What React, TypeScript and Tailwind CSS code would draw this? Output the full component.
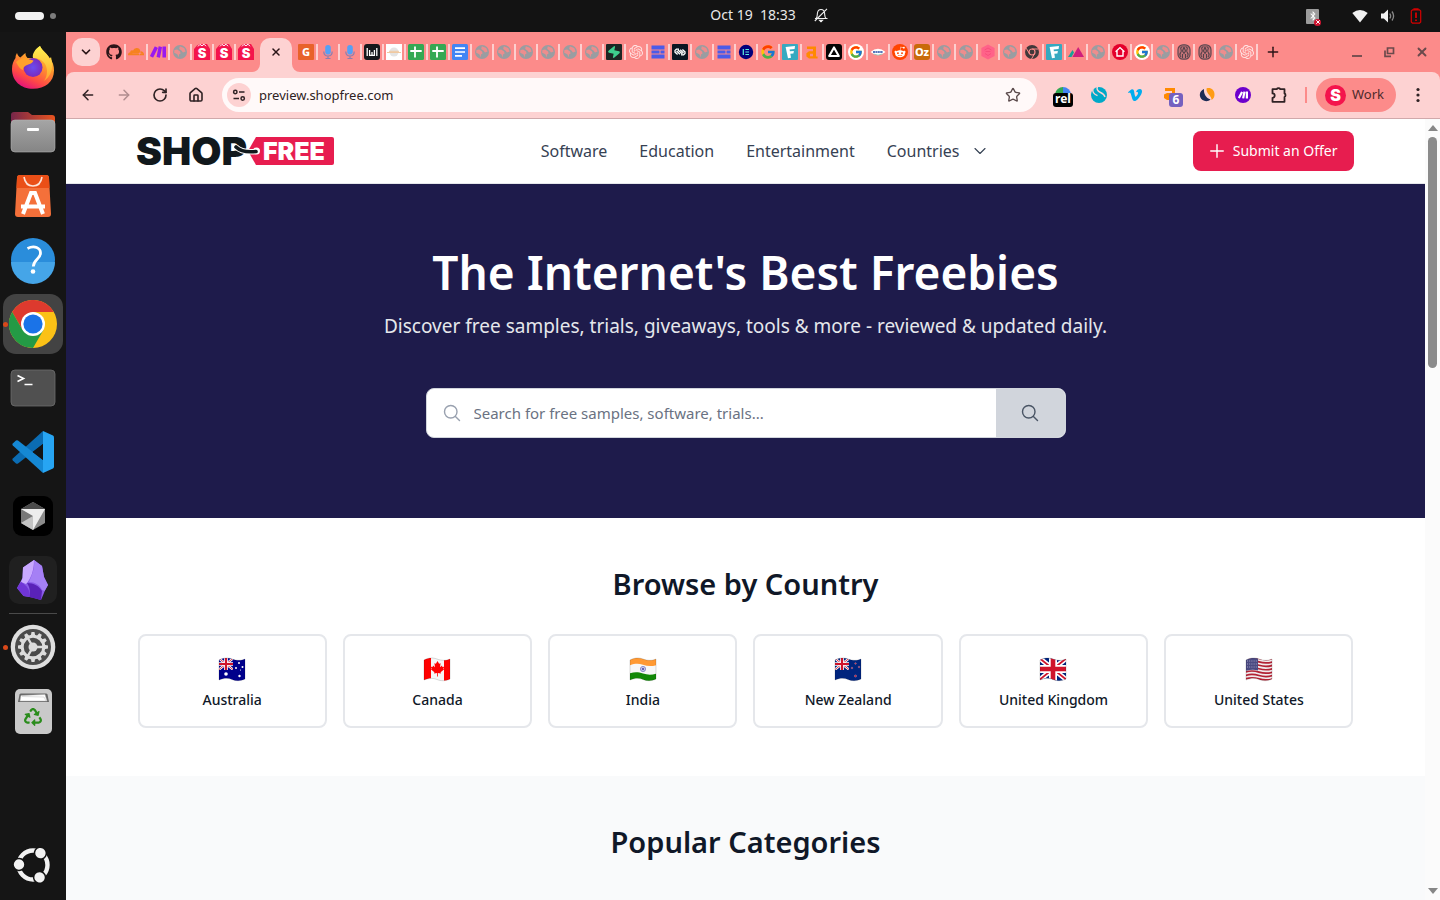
import type { ReactNode } from "react";
import {
  FaBluetoothB,
  FaCloudflare,
  FaGithub,
  FaMicrophone,
  FaRecycle,
  FaRedditAlien,
  FaVimeoV,
} from "react-icons/fa";
import { FcGoogle } from "react-icons/fc";
import { SiMake, SiOpenai, SiSupabase } from "react-icons/si";
import {
  ArrowLeft,
  ArrowRight,
  ChevronDown,
  House,
  Plus,
  RotateCw,
  Star,
  X,
} from "lucide-react";

/* ---------- favicons ---------- */

const Globe = () => (
  <svg viewBox="0 0 16 16" className="size-4">
    <circle cx="8" cy="8" r="7" fill="#9a9da1" />
    <path d="M2.4 6 5.200 5.600 8 7.400 8.600 9.600 7 10.400 6.600 13.500 5.400 10.200 2.200 8.800ZM7.800 2.200 12.200 4 13.600 7.400 11 8.400 9.400 6.600 7.200 5Z" fill="#fc8b8a" fillOpacity=".85" />
  </svg>
);

const ShopS = () => (
  <svg viewBox="0 0 16 16" className="size-4 overflow-visible">
    <path d="M0 5 3 1.5 6 0h7l3 5v11H0Z" fill="#f4144c" />
    <path d="M4 2.4 6 .4l2 1.4L10 .2l2 2" fill="none" stroke="#fff" strokeWidth="1" />
    <text x="8" y="13.6" textAnchor="middle" fontSize="13" fontWeight="900" fontFamily="Inter, sans-serif" fill="#fff">S</text>
  </svg>
);

type TileProps = { bg: string; fg: string; label: string; round?: string };
const Tile = ({ bg, fg, label, round = "rounded-[1px]" }: TileProps) => (
  <span className={`flex size-4 items-center justify-center text-[11px] leading-4 font-extrabold ${bg} ${fg} ${round}`}>
    {label}
  </span>
);

const Sheet = () => (
  <svg viewBox="0 0 16 16" className="size-4">
    <rect width="16" height="16" rx="1.5" fill="#34a853" />
    <path d="M2.3 7h11.4M7 2.5v11" stroke="#fff" strokeWidth="1.8" />
  </svg>
);

const Doc = () => (
  <svg viewBox="0 0 16 16" className="size-4">
    <rect width="16" height="16" rx="1.5" fill="#4285f4" />
    <path d="M3 4.2h10M3 8h10M3 11.8h7" stroke="#fff" strokeWidth="1.7" />
  </svg>
);

const Grid = () => (
  <svg viewBox="0 0 16 16" className="size-4">
    <path d="M1.5 1.5h13v4h-13zM1.5 6.5h8v3h-8zM10.5 6.5h4v3h-4zM1.5 10.5h13v4h-13z" fill="#4b5be8" />
  </svg>
);

const Wave = () => (
  <svg viewBox="0 0 16 16" className="size-4">
    <rect width="16" height="16" rx="3" fill="#17181c" />
    <path d="M3.200 4v8M5.600 6v6M8 8v4M10.400 6v6M12.800 4v8M5.600 11.300h4.800" fill="none" stroke="#fff" strokeWidth="1.300" />
  </svg>
);

const Squid = () => (
  <svg viewBox="0 0 16 16" className="size-4">
    <rect width="16" height="16" rx="1" fill="#0b1622" />
    <path d="M7 5.200H4.400L3 6.500v1.600l2.600 2.400M9 10.800h2.600L13 9.500V7.900l-2.600-2.400M6 6l4.400 4M8.200 5.800 11.500 9M4.600 7 8 10.300" fill="none" stroke="#fff" strokeWidth="1.300" />
  </svg>
);

const White = () => (
  <svg viewBox="0 0 16 16" className="size-4">
    <rect width="16" height="16" fill="#fff" />
    <circle cx="8" cy="8" r="4.5" fill="#e4e4e4" />
    <path d="M1 8.500h14M3 7.300h10" stroke="#f0c9a0" strokeWidth="1" />
  </svg>
);

const Elementor = () => (
  <svg viewBox="0 0 16 16" className="size-4">
    <circle cx="8" cy="8" r="7.2" fill="#03007b" />
    <path d="M5.3 5v6M7.4 5.5H11M7.4 8H11M7.4 10.5H11" stroke="#5ef2e0" strokeWidth="1.2" />
  </svg>
);

const Delta = () => (
  <svg viewBox="0 0 16 16" className="size-4">
    <rect width="16" height="16" rx="3" fill="#050505" />
    <path d="M8 3.4 12.8 12H3.200Z" fill="none" stroke="#fff" strokeWidth="2.100" strokeLinejoin="round" />
  </svg>
);

const GoogleDisc = () => (
  <span className="flex size-4 items-center justify-center rounded-full bg-white">
    <FcGoogle className="size-3.5" />
  </span>
);

const Oval = () => (
  <svg viewBox="0 0 16 16" className="size-4">
    <path d="M.5 8Q8 1.6 15.5 8 8 14.4.5 8Z" fill="#fff" />
    <path d="M3 8h10" stroke="#5676bd" strokeWidth="1.8" strokeDasharray="2 .4" />
    <path d="M3.5 10Q8 12.2 12.5 10" stroke="#8cc6b2" fill="none" strokeWidth=".8" />
  </svg>
);

const Reddit = () => (
  <span className="flex size-4 items-center justify-center rounded-full bg-[#ff4500]">
    <FaRedditAlien className="size-3 text-white" />
  </span>
);

const PinkHex = () => (
  <svg viewBox="0 0 16 16" className="size-4">
    <path d="M8 .5 14.6 4v8L8 15.5 1.4 12V4Z" fill="#ff6289" />
    <path d="M4.6 6 8 4l3.4 2M5 9.5l3 2 3-2M5.5 7.5h5" stroke="#f8507b" strokeWidth="1" fill="none" />
  </svg>
);

const DarkChrome = () => (
  <svg viewBox="0 0 16 16" className="size-4">
    <circle cx="8" cy="8" r="7" fill="#40383a" />
    <circle cx="8" cy="8" r="3" fill="none" stroke="#fc8b8a" strokeWidth="1.2" />
    <path d="M8 5h6.4M5.4 9.5 2.2 4.2M10.6 9.5 7.5 15" stroke="#fc8b8a" strokeWidth="1" />
  </svg>
);

const Peaks = () => (
  <svg viewBox="0 0 16 16" className="size-4">
    <path d="M0 13 4.5 6 6 8.5 3.5 13Z" fill="#17a398" />
    <path d="M4.4 13 10.2 3 16 13Z" fill="#cf1e7c" />
  </svg>
);

const RedHouse = () => (
  <svg viewBox="0 0 16 16" className="size-4">
    <circle cx="8" cy="8" r="8" fill="#e4002b" />
    <path d="M3.6 7.8 8 3.6l4.4 4.2M5 7v5h6V7" fill="none" stroke="#fff" strokeWidth="1.4" />
  </svg>
);

const Brain = () => (
  <svg viewBox="0 0 16 16" className="size-4">
    <rect x="2" y=".8" width="12" height="14.4" rx="5" fill="#c9767a" stroke="#5d4850" strokeWidth="1.200" />
    <path d="M6.500 2.500Q4 3.500 5 5.500T4.500 9 5 13M9.500 2.500Q12 3.500 11 5.500T11.500 9 11 13M8 3 6.500 7 8 9.500 9.500 7ZM6.500 10v4M9.500 10v4" fill="none" stroke="#54424a" strokeWidth="1.100" />
  </svg>
);

const Bolt = () => (
  <span className="flex size-4 items-center justify-center rounded-[1px] bg-[#1c2624]">
    <SiSupabase className="size-3 rotate-12 text-[#3ecf8e]" />
  </span>
);

const OpenAi = () => <SiOpenai className="size-3.5 text-[#ffe4e4]" />;
const Mic = () => (
  <svg viewBox="0 0 16 16" className="size-4">
    <rect x="5.200" y="1" width="5.600" height="9.500" rx="2.800" fill="#55a0f5" />
    <path d="M3.800 7.500q0 4.500 4.200 4.500t4.200-4.500M8 12v2.500M5.500 14.500h5" fill="none" stroke="#8a7fb0" strokeWidth="1.200" />
  </svg>
);
const Foxy = () => (
  <svg viewBox="0 0 16 16" className="size-4">
    <rect width="16" height="16" rx="1" fill="#37a9c0" />
    <path d="m3.600 3 9.400-1-.4 3-5 .500.300 1.800 4-.4-.5 2.600-3.100.3.700 4-3 .5Z" fill="#fff" />
  </svg>
);
const A = () => (
  <svg viewBox="0 0 16 16" className="size-4">
    <path d="M3 2.400h9v10h1.600v2.200H5L2.400 12.400V9.300L5 7.200h4V5H3Zm6 7.400H6v2.500h3Z" fill="#ff8a00" fillRule="evenodd" />
  </svg>
);

const leftTabs: { name: string; icon: ReactNode }[] = [
  { name: "GitHub", icon: <FaGithub className="size-4 text-[#2b1518]" /> },
  { name: "Cloudflare", icon: <FaCloudflare className="size-4 text-[#f6821f]" /> },
  { name: "Make", icon: <SiMake className="size-4 text-[#9a18f0]" /> },
  { name: "Page", icon: <Globe /> },
  { name: "Shop one", icon: <ShopS /> },
  { name: "Shop two", icon: <ShopS /> },
  { name: "Shop three", icon: <ShopS /> },
];

const wideTabs: ReactNode[] = [
  <Tile bg="bg-[#e8622a]" fg="text-white" label="G" />,
  <Mic />, <Mic />, <Wave />, <White />, <Sheet />, <Sheet />, <Doc />,
  <Globe />, <Globe />, <Globe />, <Globe />, <Globe />, <Globe />,
  <Bolt />, <OpenAi />, <Grid />, <Squid />, <Globe />, <Grid />, <Elementor />,
  <FcGoogle className="size-4" />, <Foxy />, <A />, <Delta />, <GoogleDisc />,
  <Oval />, <Reddit />,
  <Tile bg="bg-[#c96a0a]" fg="text-white" label="Oz" round="rounded-[3px]" />,
  <Globe />, <Globe />, <PinkHex />, <Globe />, <DarkChrome />, <Foxy />, <Peaks />,
  <Globe />, <RedHouse />,
];

const narrowTabs: ReactNode[] = [<GoogleDisc />, <Globe />, <Brain />, <Brain />, <Globe />, <OpenAi />];

/* ---------- top bar ---------- */

function TopBar() {
  return (
    <div className="grid h-8 shrink-0 grid-cols-[1fr_auto_1fr] items-center bg-[#131313] text-[#e8e8e8]">
      <div className="flex items-center gap-1.5 pl-[15px]">
        <span className="h-2 w-[29px] rounded-full bg-[#f2f2f2]" />
        <span className="size-1.5 rounded-full bg-[#7d7d7d]" />
      </div>
      <div className="flex items-center pb-0.5 pl-[99px]">
        <span className="whitespace-pre text-sm leading-5">Oct 19  18:33</span>
        <svg viewBox="0 0 16 16" className="ml-[17px] size-4" fill="none" stroke="#f0f0f0" strokeWidth="1.1">
          <path d="M3 11.5c1.5-1.4 1.2-3.4 1.4-5.200C4.700 3.800 6 2.500 8 2.500s3.300 1.300 3.600 3.800c.2 1.800-.1 3.800 1.400 5.200ZM1.800 14 14 1.800M2 11.500h12.500" />
          <path d="M6.500 13.300h3L8 14.800Z" fill="#f0f0f0" />
        </svg>
      </div>
      <div className="flex items-center justify-end pr-[18px]">
        <span className="relative flex h-[15px] w-[13px] items-center justify-center rounded-[1px] bg-[#9c9c9c]">
          <FaBluetoothB className="size-2.5 text-white" />
          <span className="absolute -right-0.5 -bottom-0.5 flex size-[7px] items-center justify-center rounded-full bg-[#d01430]">
            <X className="size-1.5 text-white" strokeWidth={4} />
          </span>
        </span>
        <svg viewBox="0 0 16 14" className="ml-[33px] h-3.5 w-4"><path d="M.3 4Q8-1.800 15.700 4L8 13.500Z" fill="#f2f2f2" /></svg>
        <svg viewBox="0 0 16 16" className="ml-3 size-4">
          <path d="M1 5.500h2.800L8 1.500v13L3.800 10.500H1Z" fill="#f2f2f2" />
          <path d="M9.800 5.500q1.700 2.500 0 5M12 3.500q3.200 4.500 0 9" fill="none" stroke="#8a8a8a" strokeWidth="1.300" />
        </svg>
        <svg viewBox="0 0 12 16" className="ml-3.5 h-4 w-3" fill="none" stroke="#d40000" strokeWidth="1.200">
          <path d="M4 1.600V.8h4v.8M2.500 1.800h7l1.200 1.200v11l-1.200 1.200h-7L1.300 14V3Z" />
          <path d="M6 4.500v5.500M6 11.500v1.500" strokeWidth="1.800" />
        </svg>
      </div>
    </div>
  );
}

/* ---------- dock ---------- */

const Firefox = () => (
  <svg viewBox="0 0 48 48" className="size-12">
    <defs>
      <linearGradient id="ffBody" x1=".8" y1="0" x2=".3" y2="1">
        <stop offset="0" stopColor="#ffe14a" /><stop offset=".4" stopColor="#ff9a2c" />
        <stop offset=".75" stopColor="#ff4a45" /><stop offset="1" stopColor="#e3107d" />
      </linearGradient>
      <radialGradient id="ffCore"><stop offset="0" stopColor="#6a4cf0" /><stop offset="1" stopColor="#7a2bbd" /></radialGradient>
      <linearGradient id="ffTail" x1="0" y1="0" x2="0" y2="1"><stop offset="0" stopColor="#fff250" /><stop offset="1" stopColor="#ffa22e" /></linearGradient>
    </defs>
    <path d="M8 9c.6 2 1.800 3.600 3.300 4.500C13 12 14 11 16.500 9c0 2 .5 3.500 2 5h6c0-5 3-9.500 6.500-12 1 3 4 5 6.500 8l2.500 3c4 4.500 5 9 5 13.500C45 38 36 44.800 24 44.800S3 37 3 25c0-5 1.500-8 3.500-11C6.500 12 7 10.500 8 9Z" fill="url(#ffBody)" />
    <path d="M31 2c-5 3-8 8-7 12 9 0 14 6 14 13 0 4-1 7-3 10 6-4 9-11 8-19l-1-5-1.500 2c-1-3-2.500-4.500-4.500-6.500-2-2-4-4-5-6.500Z" fill="url(#ffTail)" />
    <circle cx="24" cy="23.500" r="9.500" fill="url(#ffCore)" />
    <path d="M7 18c3-3 7-4.500 10-4.500 2 2 5 2.500 7.500 3-1 3-4 3.500-6.500 4.500-3 1-4 3-4 5-3-1-5-4-7-8Z" fill="#ffa02b" />
  </svg>
);

const Files = () => (
  <svg viewBox="0 0 48 48" className="size-12">
    <defs>
      <linearGradient id="flBack"><stop offset="0" stopColor="#77264a" /><stop offset="1" stopColor="#e9541f" /></linearGradient>
      <linearGradient id="flFront" x1="0" y1="0" x2="0" y2="1"><stop offset="0" stopColor="#a5a5a5" /><stop offset="1" stopColor="#858585" /></linearGradient>
    </defs>
    <path d="M2 18V7q0-3 3-3h14l4 3h20q3 0 3 3v8Z" fill="url(#flBack)" />
    <rect x="2" y="12" width="44" height="32" rx="4" fill="url(#flFront)" stroke="#b4b4b4" strokeWidth=".6" />
    <rect x="18" y="20" width="12" height="3" rx="1" fill="#fff" />
  </svg>
);

const AppCenter = () => (
  <svg viewBox="0 0 48 48" className="size-12">
    <path d="M11 3h26q3 0 3 3l2 36q0 3-3 3H9q-3 0-3-3L8 6q0-3 3-3Z" fill="#f4703a" />
    <path d="M11 3h26q3 0 3 3l.5 10h-33L8 6q0-3 3-3Z" fill="#ea4f17" />
    <path d="M15 5c1 6 4 9 9 9s8-3 9-9" fill="none" stroke="#fbe3d8" strokeWidth="1.600" />
    <path d="M14 42 22 21h4l8 21M12 34.500h24" fill="none" stroke="#fff" strokeWidth="4" />
  </svg>
);

const Help = () => (
  <svg viewBox="0 0 48 48" className="size-12">
    <circle cx="24" cy="24" r="22" fill="#2a8ddb" />
    <path d="M2 26a22 22 0 0 0 44 0Z" fill="#45a5e8" />
    <path d="M18.500 12.500c7-3.500 13-.5 13 4.500 0 6-7.200 6.500-7.200 13.500" fill="none" stroke="#fff" strokeWidth="2.800" />
    <circle cx="24" cy="35.500" r="2.300" fill="#fff" />
  </svg>
);

const Chrome = () => (
  <svg viewBox="0 0 48 48" className="size-12">
    <circle cx="24" cy="24" r="24" fill="#fbc116" />
    <path d="M3.200 12A24 24 0 0 1 44.800 12H24L13.600 30Z" fill="#dd3a2e" />
    <path d="M3.200 12A24 24 0 0 0 24 48L34.400 30 13.600 30Z" fill="#249a45" />
    <circle cx="24" cy="24" r="12" fill="#fff" />
    <circle cx="24" cy="24" r="9.600" fill="#1a73e8" />
  </svg>
);

const Terminal = () => (
  <svg viewBox="0 0 48 48" className="size-12">
    <rect x="2" y="6" width="44" height="36" rx="4" fill="#505050" stroke="#6d6d6d" strokeWidth=".8" />
    <path d="M8.500 11.500 14.500 14.500 8.500 17.500M15.500 20.500h8" fill="none" stroke="#fff" strokeWidth="1.700" />
  </svg>
);

const Code = () => (
  <svg viewBox="0 0 48 48" className="size-12">
    <path d="M34 3 3.800 30.500q-1 1 0 2L7 35.500q1 .7 2 0L34 16Z" fill="#0b6cb3" />
    <path d="M34 45 3.800 17.500q-1-1 0-2L7 12.500q1-.7 2 0L34 32Z" fill="#1588d4" />
    <path d="M34 3 44 7.500q1 .6 1 2v29q0 1.400-1 2L34 45Z" fill="#27a5f3" />
    <path d="M34 16v16L23.600 24Z" fill="#141414" />
  </svg>
);

const Cursor = () => (
  <svg viewBox="0 0 48 48" className="size-12">
    <rect x="4" y="4" width="40" height="40" rx="9" fill="#000" />
    <path d="M24 10 36 17v14l-12 7-12-7V17Z" fill="#8b8b8b" />
    <path d="M24 10 36 17H12Z" fill="#4b4b4b" />
    <path d="M12 17v14l12-7Z" fill="#777" />
    <path d="M12 17h24L24 38V24Z" fill="#ededed" />
    <path d="M12 31l12-7v14Z" fill="#c4c4c4" />
  </svg>
);

const Obsidian = () => (
  <svg viewBox="0 0 48 48" className="size-12">
    <rect width="48" height="48" rx="10" fill="#202020" />
    <path d="M25 4 14 11.500 13.500 22 8 32l6.500 8 9 1.500L32 44l4-9.500 3-5.500-4-8-2-11Z" fill="#8a5be8" />
    <path d="M25 4 14 11.500 13.500 22 12 26l5 2c5-5 8-14 8-24Z" fill="#c9a9ff" />
    <path d="M25 4c1 8-2 15-5 22 6 0 11 3 13 8l2.500 1L39 29l-4-8-2-11Z" fill="#a580f5" />
    <path d="M12 26l-4 6 6.500 8 6 1c1-7-3-12-8.500-15Z" fill="#7035d6" />
    <path d="M18 27c7 0 12 3 15 8l-1 9-11.500-3c1-6 0-10-2.500-14Z" fill="#5a22b8" />
  </svg>
);

const teeth = [0, 30, 60, 90, 120, 150, 180, 210, 240, 270, 300, 330];
const Settings = () => (
  <svg viewBox="0 0 48 48" className="size-12">
    <circle cx="24" cy="24" r="22.300" fill="#dedede" />
    <circle cx="24" cy="24" r="18" fill="#4b4b4b" />
    <circle cx="24" cy="24" r="10.800" fill="none" stroke="#dcdcdc" strokeWidth="3" />
    {teeth.map((deg) => (
      <path key={deg} d="M22.500 9h3l.8 4h-4.600Z" fill="#dcdcdc" transform={`rotate(${deg} 24 24)`} />
    ))}
    <path d="M24 24h10M24 24l-5.500 9.500M24 24l-5.500-9.500" stroke="#dcdcdc" strokeWidth="2.400" />
    <circle cx="24" cy="24" r="4.500" fill="#dcdcdc" />
  </svg>
);

const Trash = () => (
  <span className="relative flex h-[45px] w-[37px] items-end justify-center rounded-[5px] bg-[#c9c9c9] pb-2">
    <svg viewBox="0 0 31 9" className="absolute top-1 h-[9px] w-[31px]">
      <path d="M0 9 1.500 1.500Q2 .5 3 .5h25q1 0 1.500 1L31 9Z" fill="#666" />
      <path d="M2 8 3 2.500l24-1L29 8ZM4 3.500l22 .500 2 4" fill="#fff" stroke="#bbb" strokeWidth=".5" />
    </svg>
    <FaRecycle className="size-[18px] text-[#2a8c1c]" />
  </span>
);

const UbuntuLogo = () => (
  <svg viewBox="0 0 48 48" className="size-12">
    <circle cx="24" cy="24" r="14.500" fill="none" stroke="#f2f2f2" strokeWidth="4.400" />
    {[-58, 62, 182].map((deg) => (
      <g key={deg} transform={`rotate(${deg} 24 24)`}>
        <circle cx="38" cy="24" r="6.700" fill="#141414" />
        <circle cx="38" cy="24" r="5.200" fill="#f2f2f2" />
      </g>
    ))}
  </svg>
);

type DockItemProps = { name: string; children: ReactNode; running?: boolean; active?: boolean };
function DockItem({ name, children, running, active }: DockItemProps) {
  return (
    <button type="button" aria-label={name} className="relative flex h-16 w-full shrink-0 items-center justify-center">
      <span className={active ? "flex size-[60px] items-center justify-center rounded-[13px] bg-[#434343]" : "flex size-[60px] items-center justify-center"}>
        {children}
      </span>
      {running && <span className="absolute left-[3px] size-[5px] rounded-full bg-[#d9481a]" />}
    </button>
  );
}

function Dock() {
  return (
    <nav aria-label="Dock" className="flex w-[66px] shrink-0 flex-col bg-[#151515] pt-1 pb-[3px]">
      <DockItem name="Firefox"><Firefox /></DockItem>
      <DockItem name="Files"><Files /></DockItem>
      <DockItem name="App Center"><AppCenter /></DockItem>
      <DockItem name="Help"><Help /></DockItem>
      <DockItem name="Chrome" running active><Chrome /></DockItem>
      <DockItem name="Terminal"><Terminal /></DockItem>
      <DockItem name="Code"><Code /></DockItem>
      <DockItem name="Cursor"><Cursor /></DockItem>
      <DockItem name="Obsidian"><Obsidian /></DockItem>
      <hr className="mx-[9px] my-px border-[#4a4a4a]" />
      <DockItem name="Settings" running><Settings /></DockItem>
      <DockItem name="Trash"><Trash /></DockItem>
      <div className="flex-1" />
      <DockItem name="Show apps"><UbuntuLogo /></DockItem>
    </nav>
  );
}

/* ---------- browser ---------- */

type TabProps = { name: string; icon: ReactNode; divider?: boolean; narrow?: boolean };
function Tab({ name, icon, divider = true, narrow }: TabProps) {
  return (
    <button
      type="button"
      aria-label={name}
      className={`relative flex h-4 items-center justify-center ${narrow ? "w-[21px]" : "w-[22px]"}`}
    >
      {icon}
      {divider && <span className="absolute -right-px h-4 w-0.5 bg-[#fdcfcf]" />}
    </button>
  );
}

function TabStrip() {
  return (
    <div className="flex h-10 shrink-0 items-center bg-[#fc8b8a] pl-1.5 text-[#2b1518]">
      <button type="button" aria-label="Search tabs" className="mr-[3px] flex size-7 items-center justify-center rounded-[10px] bg-[#fdd2d2]">
        <ChevronDown className="size-3.5" strokeWidth={3} />
      </button>
      {leftTabs.map((t, i) => (
        <Tab key={t.name} name={t.name} icon={t.icon} divider={i < 6} />
      ))}
      <div className="relative mx-[3px] flex h-[34px] w-8 items-center justify-center self-end rounded-t-[10px] bg-[#fdd2d2] pb-1.5">
        <svg viewBox="0 0 8 8" className="absolute bottom-0 -left-2 size-2"><path d="M8 0v8H0A8 8 0 0 0 8 0Z" fill="#fdd2d2" /></svg>
        <button type="button" aria-label="Close tab"><X className="size-3" strokeWidth={3} /></button>
        <svg viewBox="0 0 8 8" className="absolute -right-2 bottom-0 size-2"><path d="M0 0v8h8A8 8 0 0 1 0 0Z" fill="#fdd2d2" /></svg>
      </div>
      {wideTabs.map((icon, i) => <Tab key={i} name={`Tab ${i + 9}`} icon={icon} />)}
      {narrowTabs.map((icon, i) => <Tab key={i} name={`Tab ${i + 47}`} icon={icon} narrow />)}
      <button type="button" aria-label="New tab" className="ml-2"><Plus className="size-4" strokeWidth={2.2} /></button>
      <div className="ml-auto flex items-center gap-5 pr-[11px] text-[#6b4a4c]">
        <button type="button" aria-label="Minimize">
          <svg viewBox="0 0 12 12" className="size-3"><path d="M1 10h10" stroke="currentColor" strokeWidth="1.800" /></svg>
        </button>
        <button type="button" aria-label="Restore">
          <svg viewBox="0 0 12 12" className="size-3" fill="none" stroke="currentColor" strokeWidth="1.700"><path d="M4.500 2h6v5.500h-6ZM2 4.500v5.800h6" /></svg>
        </button>
        <button type="button" aria-label="Close window"><X className="size-3.5" strokeWidth={3.200} /></button>
      </div>
    </div>
  );
}

function Toolbar() {
  return (
    <div className="bg-[#fc8b8a]">
      <div className="flex h-[47px] items-center rounded-t-lg border-b border-[#d0a9ab] bg-[#fdd2d2] pl-3.5 text-[#2f2224]">
        <div className="flex items-center gap-5">
          <button type="button" aria-label="Back"><ArrowLeft className="size-4" strokeWidth={2.200} /></button>
          <button type="button" aria-label="Forward" className="text-[#b08c8e]"><ArrowRight className="size-4" strokeWidth={2.200} /></button>
          <button type="button" aria-label="Reload"><RotateCw className="size-4" strokeWidth={2.500} /></button>
          <button type="button" aria-label="Home"><House className="size-4" strokeWidth={2.400} /></button>
        </div>
        <div className="ml-[18px] flex h-[34px] flex-1 items-center rounded-full bg-[#fff9f9] px-[5px]">
          <button type="button" aria-label="Site information" className="flex size-6 items-center justify-center rounded-full bg-[#fdd2d2]">
            <svg viewBox="0 0 14 14" className="size-3.5" fill="none" stroke="currentColor" strokeWidth="1.500">
              <circle cx="3.300" cy="4" r="1.700" /><path d="M7 4h5.500M1.500 10.500H7" /><circle cx="10.700" cy="10.500" r="1.700" />
            </svg>
          </button>
          <input aria-label="Address" defaultValue="preview.shopfree.com" className="ml-2 min-w-0 flex-1 bg-transparent text-[13px] leading-5 outline-none" />
          <button type="button" aria-label="Bookmark" className="mr-[11px]"><Star className="size-4 text-[#5a4a4b]" strokeWidth={2} /></button>
        </div>
        <div className="ml-4 flex items-center gap-4">
          <button type="button" aria-label="Release extension" className="relative size-5">
            <svg viewBox="0 0 20 20" className="size-5"><path d="M2 9a8 8 0 0 1 8-7v10H2Z" fill="#34a853" /><path d="M10 2a8 8 0 0 1 8 8v2h-8Z" fill="#4285f4" /></svg>
            <span className="absolute top-2 h-3.5 w-5 rounded-[3px] bg-black text-center text-xs font-bold leading-3 text-white left-0">rel</span>
          </button>
          <button type="button" aria-label="Surfer extension">
            <svg viewBox="0 0 20 20" className="size-5"><circle cx="10" cy="10" r="8" fill="#00a9c8" /><path d="M8.500 1.500c-1.500 3 0 4.500 3 6 2.500 1.200 4 2.500 4.500 4.500M4 3.500c-1 4 1.500 6 4.500 7.200" fill="none" stroke="#fdd2d2" strokeWidth="1.400" /></svg>
          </button>
          <button type="button" aria-label="Vimeo"><FaVimeoV className="mx-0.5 size-4 text-[#00adef]" /></button>
          <button type="button" aria-label="Ahrefs toolbar" className="relative size-5">
            <svg viewBox="0 0 20 20" className="size-5"><path d="M4 3h10v12H6l-3-2V9.500L6 8h5V6H4Z" fill="#ff8a00" /></svg>
            <span className="absolute top-2 left-2 h-3.5 w-3.5 rounded-[3px] bg-[#7561bf] text-center text-xs font-bold leading-3.5 text-white">6</span>
          </button>
          <button type="button" aria-label="Semrush extension">
            <svg viewBox="0 0 20 20" className="size-5"><path d="M7 4c-5 2-5.500 8-1.500 11 2.500 1.700 6 1.500 8-.5C9 13 6.500 9 7 4Z" fill="#1c2b55" /><path d="M9.500 3.500c4-1.500 8 1.500 8 6 0 2.500-1 4.500-3 5.500.5-4-5.500-6-5-11.500Z" fill="#ff9c14" /></svg>
          </button>
          <button type="button" aria-label="Make extension" className="mx-0.5 flex size-4 items-center justify-center rounded-full bg-[#6d00cc]"><SiMake className="size-2.5 text-white" /></button>
          <button type="button" aria-label="Extensions">
            <svg viewBox="0 0 20 20" className="size-5" fill="none" stroke="currentColor" strokeWidth="1.800"><path d="M3.500 4.200h4.200a2 1.800 0 0 1 3.600 0h4.200v4.200a1.800 2 0 0 1 0 3.600v4.800h-12v-4a2.200 2.200 0 0 0 0-4.400Z" strokeLinejoin="round" /></svg>
          </button>
        </div>
        <span className="ml-4 h-4 w-0.5 bg-[#fc8b8a]" />
        <button type="button" className="ml-[9px] flex h-[34px] w-20 items-center gap-1.5 rounded-full bg-[#fc8b8a] pl-[9px] text-[13px] text-[#4d2a2c]">
          <span className="flex size-[21px] shrink-0 items-center justify-center rounded-full bg-[#f4144c] font-[Inter] text-base font-black text-white">S</span>
          Work
        </button>
        <button type="button" aria-label="Menu" className="mr-3 ml-3">
          <svg viewBox="0 0 20 20" className="size-5" fill="currentColor"><circle cx="10" cy="4.500" r="1.600" /><circle cx="10" cy="10" r="1.600" /><circle cx="10" cy="15.500" r="1.600" /></svg>
        </button>
      </div>
    </div>
  );
}

/* ---------- page ---------- */

const Logo = () => (
  <svg viewBox="0 0 198 32" className="h-8 w-[198px] overflow-visible" role="img" aria-label="Shop Free">
    <text x="-2" y="29.500" fontSize="39" fontWeight="900" fontFamily="Inter, sans-serif" fill="#11181c">SHOP</text>
    <path d="M118 2h76q2 0 2 2v24q0 2-2 2h-76l-8-14Z" fill="#e71d4f" />
    <text x="125" y="25" fontSize="25" fontWeight="900" fontFamily="Inter, sans-serif" fill="#fff">FREE</text>
    <circle cx="118.500" cy="16" r="3.500" fill="#fff" />
    <path d="M98 12c4 4 10 5.500 20 4.500" fill="none" stroke="#fff" strokeWidth="5.500" />
    <path d="M98 12c4 4 10 5.500 20 4.500" fill="none" stroke="#11181c" strokeWidth="3.600" strokeLinecap="round" />
  </svg>
);

type IconProps = { className: string; d: string };
const LineIcon = ({ className, d }: IconProps) => (
  <svg viewBox="0 0 24 24" className={className} fill="none" stroke="currentColor" strokeWidth="1.700" strokeLinecap="round" strokeLinejoin="round" aria-hidden="true">
    <path d={d} />
  </svg>
);
const searchPath = "m21 21-5.197-5.197m0 0A7.5 7.5 0 1 0 5.196 5.196a7.5 7.5 0 0 0 10.607 10.607Z";
const chevronPath = "m19.500 8.250-7.500 7.500-7.500-7.500";
const plusPath = "M12 4.500v15m7.500-7.500h-15";

function SiteHeader() {
  return (
    <header className="border-b border-gray-200 bg-white">
      <div className="mx-auto flex h-16 max-w-7xl items-center justify-between px-8">
        <a href="#home"><Logo /></a>
        <nav aria-label="Main" className="flex items-center gap-8 text-base text-gray-700">
          <a href="#software">Software</a>
          <a href="#education">Education</a>
          <a href="#entertainment">Entertainment</a>
          <button type="button" className="flex items-center gap-3">
            Countries
            <LineIcon className="size-4" d={chevronPath} />
          </button>
        </nav>
        <a href="#submit" className="flex h-10 items-center gap-1.5 rounded-lg bg-[#e71d4f] pr-4 pl-3.5 text-sm text-white">
          <LineIcon className="size-5" d={plusPath} />
          Submit an Offer
        </a>
      </div>
    </header>
  );
}

function Hero() {
  return (
    <section className="bg-[#1e1b4b] px-8 pt-16 pb-20 text-center">
      <h1 className="mb-4 text-[46px] font-semibold leading-[48px] text-white">The Internet's Best Freebies</h1>
      <p className="mb-12 text-[19px] leading-7 text-gray-200">
        Discover free samples, trials, giveaways, tools &amp; more - reviewed &amp; updated daily.
      </p>
      <form className="mx-auto flex h-[50px] max-w-[640px] overflow-hidden rounded-lg border border-gray-300 bg-white" onSubmit={(e) => e.preventDefault()}>
        <label className="flex flex-1 items-center gap-3 pl-[15px]">
          <LineIcon className="size-5 text-gray-400" d={searchPath} />
          <input
            type="search"
            aria-label="Search"
            placeholder="Search for free samples, software, trials..."
            className="min-w-0 flex-1 bg-transparent text-[15px] leading-6 outline-none placeholder:text-gray-500"
          />
        </label>
        <button type="submit" aria-label="Search" className="flex w-[69px] items-center justify-center bg-gray-300">
          <LineIcon className="size-5 text-gray-600" d={searchPath} />
        </button>
      </form>
    </section>
  );
}

const wave = "M2 4C7 1.500 11 1.500 15 3s9 2 13 0v20c-4 2.200-9 2.200-13 .500s-8-1.500-13 .500Z";

const UnionJack = () => (
  <>
    <path d="M0 1 30 25M30 1 0 25" stroke="#fff" strokeWidth="5" />
    <path d="M0 1 30 25M30 1 0 25" stroke="#cf142b" strokeWidth="1.800" />
    <path d="M15 0v26M0 13h30" stroke="#fff" strokeWidth="8" />
    <path d="M15 0v26M0 13h30" stroke="#cf142b" strokeWidth="4.600" />
  </>
);

const Canton = () => (
  <svg x="2" y="2" width="14" height="12" viewBox="0 0 30 26" preserveAspectRatio="none"><UnionJack /></svg>
);

type FlagProps = { id: string; children: ReactNode };
const Flag = ({ id, children }: FlagProps) => (
  <svg viewBox="0 0 30 26" className="h-[26px] w-[30px]" aria-hidden="true">
    <clipPath id={id}><path d={wave} /></clipPath>
    <g clipPath={`url(#${id})`}>{children}</g>
    <path d={wave} fill="none" stroke="#000" strokeOpacity=".18" strokeWidth=".8" />
  </svg>
);

const countries: { name: string; flag: ReactNode }[] = [
  {
    name: "Australia",
    flag: (
      <Flag id="flag-au">
        <rect width="30" height="26" fill="#00008b" />
        <Canton />
        <g fill="#fff"><circle cx="9" cy="18" r="1.800" /><circle cx="22" cy="7" r="1" /><circle cx="19" cy="12" r="1" /><circle cx="25.500" cy="11" r="1" /><circle cx="22.500" cy="20" r="1.200" /><circle cx="23.500" cy="14" r=".6" /></g>
      </Flag>
    ),
  },
  {
    name: "Canada",
    flag: (
      <Flag id="flag-ca">
        <rect width="30" height="26" fill="#f5f5f5" />
        <path d="M0 0h9v26H0ZM22 0h8v26h-8Z" fill="#ff0000" />
        <path d="m15.500 5 1.600 2.800 1.500-.6-.6 4 2-1.600.4 1.300 1.800-.2-.8 2 .8.600-3.600 3 .3 1.200-3-.5v3.500h-.8V17l-3 .500.300-1.200-3.600-3 .8-.6-.8-2 1.800.2.400-1.300 2 1.600-.6-4 1.500.6Z" fill="#ff0000" />
      </Flag>
    ),
  },
  {
    name: "India",
    flag: (
      <Flag id="flag-in">
        <rect width="30" height="26" fill="#f7f7f7" />
        <path d="M0 0h30v8.500c-5 2-10 2-15 .300S6 7.500 0 10Z" fill="#ff9933" />
        <path d="M0 18c6-2.500 10-2.200 15-.500s10 1.500 15-.500v9H0Z" fill="#128807" />
        <circle cx="15" cy="13" r="2.600" fill="#c9c9ea" stroke="#7a7ac0" strokeWidth=".8" /><circle cx="15" cy="13" r=".9" fill="#33339c" />
      </Flag>
    ),
  },
  {
    name: "New Zealand",
    flag: (
      <Flag id="flag-nz">
        <rect width="30" height="26" fill="#00247d" />
        <Canton />
        <g fill="#cc142b" stroke="#c9a9c4" strokeWidth=".4"><circle cx="22.500" cy="7.500" r=".8" /><circle cx="19" cy="12" r=".8" /><circle cx="26" cy="11" r=".8" /><circle cx="22.500" cy="20" r="1.100" /></g>
      </Flag>
    ),
  },
  {
    name: "United Kingdom",
    flag: (
      <Flag id="flag-gb">
        <rect width="30" height="26" fill="#00247d" />
        <UnionJack />
      </Flag>
    ),
  },
  {
    name: "United States",
    flag: (
      <Flag id="flag-us">
        <rect width="30" height="26" fill="#f1eaec" />
        <g fill="none" stroke="#b22234" strokeWidth="1.700">
          {[3, 6.4, 9.800, 13.200, 16.600, 20, 23.400].map((y) => (
            <path key={y} d={`M0 ${y}c6-2.500 10-2 15-.5s10 1.500 15-.5`} />
          ))}
        </g>
        <path d="M0 0h14v14.500q-6-2-14 1Z" fill="#4b4a82" />
        <path d="M3 5h11M3 8h11M3 11h11" stroke="#b9b8d4" strokeWidth=".8" strokeDasharray="1 1.200" />
      </Flag>
    ),
  },
];

function Countries() {
  return (
    <section className="bg-white py-12">
      <div className="mx-auto max-w-7xl px-8">
        <h2 className="mb-8 text-center text-[29px] font-semibold leading-9 text-gray-900">Browse by Country</h2>
        <div className="grid grid-cols-6 gap-4">
          {countries.map((c) => (
            <a key={c.name} href="#country" className="flex flex-col items-center gap-2 rounded-lg border-2 border-gray-200 bg-white px-4 pt-5 pb-4">
              {c.flag}
              <span className="text-sm font-medium leading-5 text-gray-900">{c.name}</span>
            </a>
          ))}
        </div>
      </div>
    </section>
  );
}

function Categories() {
  return (
    <section className="flex-1 bg-gray-50 py-12">
      <h2 className="text-center text-[29px] font-semibold leading-9 text-gray-900">Popular Categories</h2>
    </section>
  );
}

function Scrollbar() {
  return (
    <div aria-hidden="true" className="flex w-[15px] shrink-0 flex-col items-center bg-[#fbfbfb] py-1.5">
      <svg viewBox="0 0 10 6" className="mb-1.5 h-1.5 w-2.5"><path d="M0 6 5 0l5 6Z" fill="#868686" /></svg>
      <span className="h-[30%] w-[9px] rounded-full bg-[#8b8b8b]" />
      <svg viewBox="0 0 10 6" className="mt-auto h-1.5 w-2.5"><path d="M0 0 5 6l5-6Z" fill="#868686" /></svg>
    </div>
  );
}

export default function App() {
  return (
    <div className="flex h-screen flex-col overflow-hidden bg-[#131313] font-['Noto_Sans',sans-serif]">
      <TopBar />
      <div className="flex min-h-0 flex-1">
        <Dock />
        <div className="flex min-w-0 flex-1 flex-col">
          <TabStrip />
          <Toolbar />
          <div className="flex min-h-0 flex-1">
            <main className="flex min-w-0 flex-1 flex-col overflow-hidden">
              <SiteHeader />
              <Hero />
              <Countries />
              <Categories />
            </main>
            <Scrollbar />
          </div>
        </div>
      </div>
    </div>
  );
}
